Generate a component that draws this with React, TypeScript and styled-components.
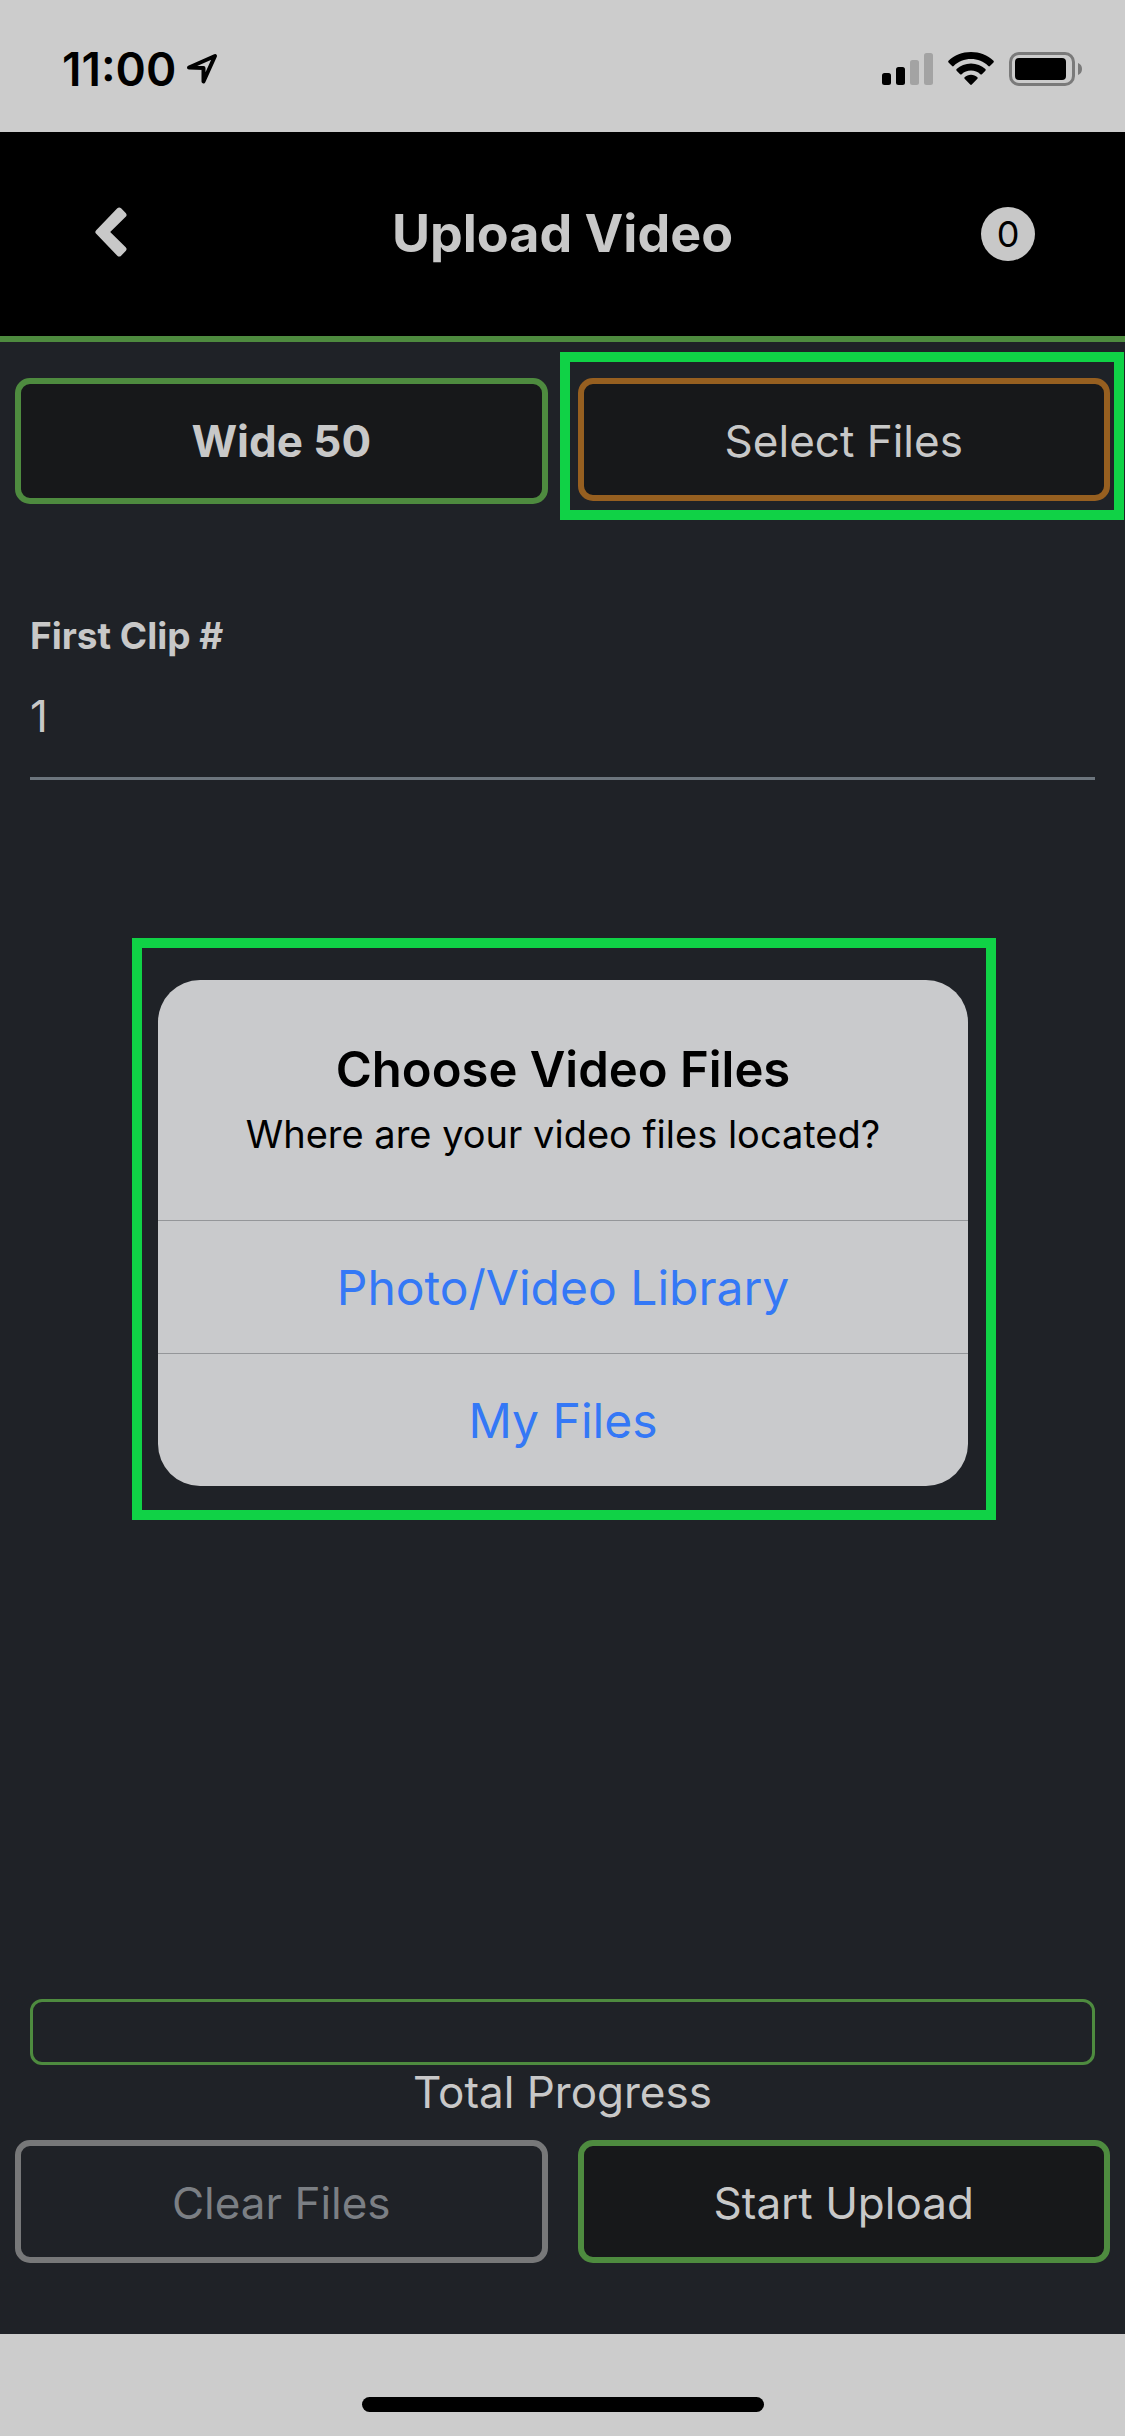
import React, { useState } from "react";
import styled, { createGlobalStyle } from "styled-components";

const color = {
  chrome: "#cccccc",
  page: "#1f2227",
  panel: "#17181a",
  text: "#c8c8c8",
  muted: "#7b7f84",
  rule: "#6c757d",
  green: "#4e8b3f",
  orange: "#965f20",
  grey: "#777879",
  marker: "#10d246",
  dialog: "#c9cacc",
  divider: "#949699",
  link: "#3478f6",
};

const GlobalStyle = createGlobalStyle`
  *, *::before, *::after { box-sizing: border-box; }
  body { margin: 0; background: ${color.page}; }
  body, button, input {
    font-family: Inter, "Liberation Sans", sans-serif;
  }
`;

const Screen = styled.div`
  display: flex;
  flex-direction: column;
  min-height: 100vh;
  color: ${color.text};
  background: ${color.page};
`;

const StatusBar = styled.div`
  display: flex;
  justify-content: space-between;
  align-items: center;
  height: 132px;
  padding: 6px 43px 0 62px;
  background: ${color.chrome};
  color: #000;
`;

const Clock = styled.div`
  display: flex;
  align-items: center;
  gap: 10px;
  font-size: 46px;
  font-weight: 600;
  line-height: 52px;
`;

const StatusIcons = styled.div`
  display: flex;
  align-items: center;
  gap: 15px;
`;

const Header = styled.header`
  display: grid;
  grid-template-columns: 204px 1fr 204px;
  align-items: center;
  height: 210px;
  padding: 0 15px;
  border-bottom: 6px solid ${color.green};
  background: #000;
`;

const BackButton = styled.button`
  justify-self: start;
  display: flex;
  margin-left: 72px;
  padding: 8px 8px 12px;
  border: 0;
  background: none;
  color: ${color.text};
`;

const Title = styled.h1`
  margin: 0;
  font-size: 52px;
  font-weight: 700;
  line-height: 60px;
  text-align: center;
`;

const Badge = styled.span`
  justify-self: end;
  display: grid;
  place-items: center;
  width: 54px;
  height: 54px;
  margin-right: 75px;
  border-radius: 50%;
  background: ${color.text};
  color: #000;
  font-size: 36px;
  line-height: 44px;
`;

const Main = styled.main`
  display: flex;
  flex: 1;
  flex-direction: column;
  padding: 36px 15px 71px;
`;

const ButtonRow = styled.div`
  display: grid;
  grid-template-columns: 1fr 1fr;
  align-items: start;
  gap: 30px;
`;

type Tone = "green" | "orange";

const ActionButton = styled.button<{ $tone: Tone; $strong?: boolean }>`
  width: 100%;
  height: ${(p) => (p.$strong ? 126 : 123)}px;
  padding: ${(p) => (p.$strong ? 0 : 3)}px 12px 0;
  border: 6px solid ${(p) => color[p.$tone]};
  border-radius: 15px;
  background: ${color.panel};
  color: ${color.text};
  font-size: 44px;
  font-weight: ${(p) => (p.$strong ? 700 : 400)};
  line-height: 54px;

  &:disabled {
    border-color: ${color.grey};
    background: transparent;
    color: ${color.muted};
  }
`;

const Marked = styled.div`
  position: relative;

  &::after {
    content: "";
    position: absolute;
    inset: -26px -14px -19px -18px;
    border: 10px solid ${color.marker};
    pointer-events: none;
  }
`;

const Field = styled.div`
  display: flex;
  flex-direction: column;
  gap: 28px;
  margin: 110px 15px 0;
  border-bottom: 3px solid ${color.rule};
`;

const FieldLabel = styled.label`
  font-size: 37px;
  font-weight: 700;
  line-height: 44px;
`;

const FieldInput = styled.input`
  width: 100%;
  height: 60px;
  margin-bottom: 31px;
  padding: 0;
  border: 0;
  outline: 0;
  background: none;
  color: ${color.text};
  font-size: 44px;
`;

const Footer = styled.footer`
  margin-top: auto;
`;

const Progress = styled.div`
  display: flex;
  flex-direction: column;
  margin: 0 15px 20px;
  font-size: 44px;
  line-height: 55px;
  text-align: center;
`;

const ProgressTrack = styled.div`
  height: 66px;
  border: 3px solid ${color.green};
  border-radius: 12px;
`;

const ProgressFill = styled.div`
  height: 100%;
  border-radius: 8px;
  background: ${color.green};
`;

const HomeArea = styled.div`
  display: flex;
  justify-content: center;
  height: 102px;
  padding-top: 63px;
  background: ${color.chrome};
`;

const HomeIndicator = styled.div`
  width: 402px;
  height: 15px;
  border-radius: 8px;
  background: #000;
`;

const Overlay = styled.div`
  position: absolute;
  inset: 0;
  display: flex;
  align-items: center;
  justify-content: center;
  padding: 22px 0 0 3px;
`;

const DialogMarker = styled.div`
  width: 864px;
  max-width: 100%;
  padding: 32px 18px 24px 16px;
  border: 10px solid ${color.marker};
`;

const Dialog = styled.div`
  overflow: hidden;
  border-radius: 42px;
  background: ${color.dialog};
  color: #000;
  text-align: center;
`;

const DialogHead = styled.div`
  padding: 58px 40px 60px;
`;

const DialogTitle = styled.h2`
  margin: 0;
  font-size: 49px;
  font-weight: 600;
  line-height: 64px;
`;

const DialogMessage = styled.p`
  margin: 6px 0 0;
  font-size: 38px;
  line-height: 52px;
`;

const DialogOption = styled.button`
  display: block;
  width: 100%;
  height: 133px;
  padding: 2px 12px 0;
  border: 0;
  border-top: 1px solid ${color.divider};
  background: none;
  color: ${color.link};
  font-size: 48px;
  line-height: 64px;
`;

const LocationIcon = () => (
  <svg width="32" height="32" viewBox="0 0 32 32" fill="none" aria-hidden="true">
    <path
      d="M3 14.500 29 3 17.500 28.500V15Z"
      stroke="currentColor"
      strokeWidth="4"
      strokeLinejoin="round"
    />
  </svg>
);

const SignalIcon = () => (
  <svg width="51" height="34" viewBox="0 0 51 34" aria-hidden="true">
    <rect x="0" y="21" width="9" height="12" rx="2.500" />
    <rect x="14" y="15" width="9" height="18" rx="2.500" />
    <rect x="28" y="8" width="9" height="25" rx="2.500" fill="#a3a3a3" />
    <rect x="42" y="1" width="9" height="32" rx="2.500" fill="#a3a3a3" />
  </svg>
);

const WifiIcon = () => (
  <svg width="46" height="34" viewBox="0 0 46 34" aria-hidden="true">
    <path d="M23 0C31.700 0 39.600 3.300 45.500 8.800c.5.5.5 1.100 0 1.600l-3.600 3.600c-.5.5-1.100.5-1.600 0C35.700 9.700 29.600 7.100 23 7.100S10.300 9.700 5.700 14c-.5.5-1.100.5-1.600 0L.5 10.400c-.5-.5-.5-1.100 0-1.600C6.400 3.300 14.300 0 23 0Z" />
    <path d="M23 11.500c5.600 0 10.600 2.100 14.400 5.600.5.5.5 1.100 0 1.600l-3.500 3.500c-.5.5-1.100.5-1.600 0-2.400-2.200-5.700-3.600-9.300-3.600s-6.900 1.400-9.300 3.600c-.5.5-1.100.5-1.600 0l-3.500-3.500c-.5-.5-.5-1.100 0-1.600 3.800-3.500 8.800-5.600 14.400-5.600Z" />
    <path d="M23 22.800c2.500 0 4.700.9 6.400 2.400.5.500.5 1.100 0 1.600l-5.600 5.700c-.5.500-1.100.5-1.600 0l-5.600-5.700c-.5-.5-.5-1.100 0-1.600 1.700-1.500 3.900-2.400 6.400-2.400Z" />
  </svg>
);

const BatteryIcon = () => (
  <svg width="73" height="34" viewBox="0 0 73 34" aria-hidden="true">
    <rect x="1.500" y="1.500" width="63" height="31" rx="8.500" fill="none" stroke="#7a7a7a" strokeWidth="3" />
    <rect x="6" y="6" width="51" height="22" rx="4" />
    <path d="M69 11c2.600 1 4 3.300 4 6s-1.400 5-4 6Z" fill="#7a7a7a" />
  </svg>
);

const BackIcon = () => (
  <svg width="32" height="50" viewBox="0 0 32 50" fill="currentColor" aria-hidden="true">
    <path d="M1.200 23.200 22.300 1.300c1.200-1.200 2.600-1.200 3.800 0l4.600 4.700c1.200 1.200 1.200 2.600 0 3.800L15.200 25l15.500 15.200c1.200 1.200 1.200 2.600 0 3.800l-4.600 4.700c-1.200 1.200-2.600 1.200-3.800 0L1.200 26.800c-1.200-1.200-1.200-2.400 0-3.600Z" />
  </svg>
);

export default function App() {
  const [firstClip, setFirstClip] = useState("1");
  const progress = 0;

  return (
    <Screen>
      <GlobalStyle />
      <StatusBar>
        <Clock>
          11:00
          <LocationIcon />
        </Clock>
        <StatusIcons>
          <SignalIcon />
          <WifiIcon />
          <BatteryIcon />
        </StatusIcons>
      </StatusBar>

      <Header>
        <BackButton type="button" aria-label="Back">
          <BackIcon />
        </BackButton>
        <Title>Upload Video</Title>
        <Badge>0</Badge>
      </Header>

      <Main>
        <ButtonRow>
          <ActionButton type="button" $tone="green" $strong>
            Wide 50
          </ActionButton>
          <Marked>
            <ActionButton type="button" $tone="orange">
              Select Files
            </ActionButton>
          </Marked>
        </ButtonRow>

        <Field>
          <FieldLabel htmlFor="first-clip">First Clip #</FieldLabel>
          <FieldInput
            id="first-clip"
            inputMode="numeric"
            value={firstClip}
            onChange={(e) => setFirstClip(e.target.value)}
          />
        </Field>

        <Footer>
          <Progress>
            <ProgressTrack role="progressbar" aria-labelledby="total" aria-valuenow={progress}>
              <ProgressFill style={{ width: `${progress}%` }} />
            </ProgressTrack>
            <span id="total">Total Progress</span>
          </Progress>
          <ButtonRow>
            <ActionButton type="button" $tone="green" disabled>
              Clear Files
            </ActionButton>
            <ActionButton type="button" $tone="green">
              Start Upload
            </ActionButton>
          </ButtonRow>
        </Footer>
      </Main>

      <HomeArea>
        <HomeIndicator />
      </HomeArea>

      <Overlay>
        <DialogMarker>
          <Dialog role="dialog" aria-labelledby="dialog-title" aria-describedby="dialog-message">
            <DialogHead>
              <DialogTitle id="dialog-title">Choose Video Files</DialogTitle>
              <DialogMessage id="dialog-message">Where are your video files located?</DialogMessage>
            </DialogHead>
            <DialogOption type="button">Photo/Video Library</DialogOption>
            <DialogOption type="button">My Files</DialogOption>
          </Dialog>
        </DialogMarker>
      </Overlay>
    </Screen>
  );
}
